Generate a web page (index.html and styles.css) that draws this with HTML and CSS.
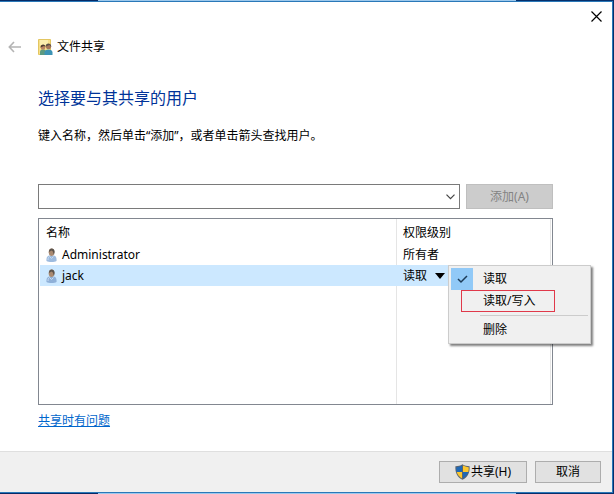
FILE: index.html
```html
<!DOCTYPE html>
<html lang="zh-CN">
<head>
    <meta charset="UTF-8">
    <meta name="viewport" content="width=device-width, initial-scale=1.0">
    <title>文件共享</title>
    <link rel="stylesheet" href="styles.css">
</head>
<body>
    <main class="dialog">
        <!-- Title bar -->
        <div class="title-bar">
            <button type="button" class="close-btn" aria-label="关闭">
                <svg width="11" height="11" viewBox="0 0 11 11"><path d="M.5.5l10 10M10.5.5l-10 10" stroke="#000" stroke-width="1.2"/></svg>
            </button>
        </div>

        <!-- Wizard header -->
        <header class="wizard-header">
            <button type="button" class="back-btn" aria-label="后退" disabled>
                <svg width="13" height="12" viewBox="0 0 13 12" fill="none" stroke="#b4b4b4" stroke-width="1.6"><path d="M6 1L1.3 6 6 11M1.5 6H13"/></svg>
            </button>
            <svg class="folder-icon" width="15" height="17" viewBox="0 0 15 17">
                <path d="M.5.5h12v15H.5z" fill="#f7e08a" stroke="#e3c662"/>
                <path d="M2 1h8v5H2z" fill="#fbeeae"/>
                <path d="M2 16v-3c0-2 1.500-2.500 3-2.500s3 .5 3 2.500v3z" fill="#5c9a80"/>
                <circle cx="5" cy="8.500" r="2.300" fill="#b98563"/>
                <path d="M2.500 8.500C2.300 4.500 7.700 4.500 7.500 8L6 7z" fill="#4c3b31"/>
                <path d="M6.500 16v-2.500c0-2 1.800-3 4-3s4 1 4 3V16z" fill="#3c93b5"/>
                <circle cx="10.500" cy="7.500" r="2.600" fill="#a5765a"/>
                <path d="M7.700 7.500C7.500 3.500 13.500 3.500 13.300 8L11.500 6z" fill="#5b5148"/>
            </svg>
            <span>文件共享</span>
        </header>

        <section class="content">
            <h1>选择要与其共享的用户</h1>
            <p class="hint"><label for="userName">键入名称，然后单击“添加”，或者单击箭头查找用户。</label></p>

            <form class="add-user">
                <div class="combo">
                    <input type="text" id="userName" name="userName" autocomplete="off">
                    <button type="button" class="combo-arrow" aria-label="查找用户">
                        <svg width="9" height="6" viewBox="0 0 9 6" fill="none" stroke="#444" stroke-width="1.2"><path d="M.5.7l4 4 4-4"/></svg>
                    </button>
                </div>
                <button type="submit" class="add-btn" disabled>添加(A)</button>
            </form>

            <!-- User list -->
            <div class="user-list">
                <table>
                    <thead>
                        <tr>
                            <th>名称</th>
                            <th class="level">权限级别</th>
                        </tr>
                    </thead>
                    <tbody>
                        <tr>
                            <td>
                                <div class="user">
                                    <svg width="11" height="14" viewBox="0 0 11 14">
                                        <path d="M.5 13c-.5-4 1.500-5.500 3-5.500h4c2 0 3.500 2 3 5.500-2 1.300-8 1.300-10 0z" fill="#9dbbdf"/>
                                        <path d="M2 12c0-2 .5-3 1.500-3.500l2 2 2-2" fill="none" stroke="#c9dcf1"/>
                                        <ellipse cx="5.500" cy="4.300" rx="2.800" ry="3.800" fill="#aa8a71"/>
                                        <path d="M3 4C2.500-.8 9-.8 8.600 4L8 7C7 5 7.500 3 5.500 2.500z" fill="#5d544d"/>
                                    </svg>
                                    <span>Administrator</span>
                                </div>
                            </td>
                            <td class="level">所有者</td>
                        </tr>
                        <tr class="selected">
                            <td>
                                <div class="user">
                                    <svg width="11" height="14" viewBox="0 0 11 14">
                                        <path d="M.5 13c-.5-4 1.500-5.500 3-5.500h4c2 0 3.500 2 3 5.500-2 1.300-8 1.300-10 0z" fill="#8fb0d8"/>
                                        <path d="M2 12c0-2 .5-3 1.500-3.500l2 2 2-2" fill="none" stroke="#c9dcf1"/>
                                        <ellipse cx="5.500" cy="4.300" rx="2.800" ry="3.800" fill="#aa8a71"/>
                                        <path d="M3 4C2.500-.8 9-.8 8.600 4L8 7C7 5 7.500 3 5.500 2.500z" fill="#5d544d"/>
                                    </svg>
                                    <span>jack</span>
                                </div>
                            </td>
                            <td class="level">
                                <button type="button" class="level-btn" aria-haspopup="menu" aria-expanded="true">
                                    读取
                                    <svg width="10" height="6" viewBox="0 0 10 6"><path d="M0 0h10L5 6z"/></svg>
                                </button>
                                <div class="menu" role="menu">
                                    <button type="button" role="menuitemradio" aria-checked="true">
                                        <span class="check">
                                            <svg width="11" height="9" viewBox="0 0 11 9" fill="none" stroke="#1c3a57" stroke-width="1.500"><path d="M1 4l3 3 6-6"/></svg>
                                        </span>
                                        读取
                                    </button>
                                    <button type="button" role="menuitemradio" aria-checked="false" class="marked">读取/写入</button>
                                    <hr>
                                    <button type="button" role="menuitem">删除</button>
                                </div>
                            </td>
                        </tr>
                    </tbody>
                </table>
            </div>

            <a href="#" class="help-link">共享时有问题</a>
        </section>

        <footer class="actions">
            <button type="button">
                <svg width="15" height="16" viewBox="0 0 15 16">
                    <path d="M7.500.3C9.500 1.700 12 2.200 14.600 2.200c.4 6-1.600 11-7.100 13.500C2 13.200 0 8.200.4 2.200 3 2.200 5.500 1.700 7.500.3z" fill="#5b6570"/>
                    <path d="M7 1.600V8H1.700C1.300 6.500 1.200 4.800 1.300 3.200 3.500 3.100 5.500 2.500 7 1.600z" fill="#1f68b5"/>
                    <path d="M8 1.600V8h5.300c.4-1.500.5-3.200.4-4.800C11.500 3.100 9.500 2.500 8 1.600z" fill="#fbc72e"/>
                    <path d="M7 8v6.400C4.500 13 2.500 11 1.700 8z" fill="#fbc72e"/>
                    <path d="M8 8v6.400c2.500-1.400 4.500-3.400 5.300-6.400z" fill="#1f68b5"/>
                </svg>
                共享(H)
            </button>
            <button type="button" class="cancel-btn">取消</button>
        </footer>
    </main>
</body>
</html>
```

FILE: styles.css
```css
* {
    box-sizing: border-box;
}

/* Desktop behind the dialog */
body {
    margin: 0;
    padding: 1px 1px 1px 0;
    min-height: 100vh;
    display: flex;
    background: linear-gradient(90deg, #052a66 16%, #9cc8ec 16%, #9cc8ec 84%, #052f6b 84%);
    font-family: "Noto Sans", "Noto Sans CJK SC", sans-serif;
    font-size: 12px;
    line-height: 20px;
    color: #000;
}

button, input {
    font: inherit;
    color: inherit;
}

button {
    padding: 0;
    border: none;
    background: none;
}

svg {
    display: block;
    flex: none;
}

.dialog {
    flex: 1;
    display: flex;
    flex-direction: column;
    background: #fff;
    border: 1px solid #2a78b8;
    border-left: none;
}

.title-bar {
    display: flex;
    justify-content: flex-end;
    height: 28px;
}

.close-btn {
    display: flex;
    align-items: center;
    padding: 0 10px;
}

.wizard-header {
    display: flex;
    align-items: center;
    height: 34px;
    padding-left: 8px;
}

.folder-icon {
    margin: 0 4px 0 17px;
}

.content {
    flex: 1;
    display: flex;
    flex-direction: column;
    padding: 22px 59px 20px 38px;
}

h1 {
    margin: 0;
    font-size: 16px;
    line-height: 24px;
    font-weight: normal;
    color: #003399;
}

.hint {
    margin: 16px 0 38px;
}

.add-user {
    display: flex;
    gap: 6px;
    margin-bottom: 9px;
}

.combo {
    flex: 1;
    display: flex;
    height: 25px;
    border: 1px solid #7a7a7a;
}

.combo input {
    flex: 1;
    min-width: 0;
    padding: 0 4px;
    border: none;
    outline: none;
}

.combo-arrow {
    display: flex;
    align-items: center;
    padding: 0 4px;
}

.add-btn {
    width: 87px;
    background: #ccc;
    border: 1px solid #bfbfbf;
    color: #838383;
}

/* The background draws the two column dividers */
.user-list {
    flex: 1;
    padding: 2px 1px;
    border: 1px solid #828790;
    background:
        linear-gradient(#e5e5e5, #e5e5e5) right 155px top / 1px 100% no-repeat,
        linear-gradient(#e5e5e5, #e5e5e5) right 1px top / 1px 100% no-repeat;
}

table {
    width: 100%;
    table-layout: fixed;
    border-collapse: collapse;
}

th, td {
    height: 21px;
    padding: 0 6px;
    font-weight: normal;
    text-align: left;
}

th {
    height: 23px;
}

.level {
    position: relative;
    width: 154px;
}

.selected {
    background: #cce8ff;
}

.user {
    display: flex;
    align-items: center;
    gap: 5px;
}

.level-btn {
    display: flex;
    align-items: center;
    gap: 8px;
}

/* Permission menu */
.menu {
    position: absolute;
    top: 0;
    left: 51px;
    width: 143px;
    padding: 2px;
    background: #f0f0f0;
    border: 1px solid #ccc;
    box-shadow: 2px 2px 2px rgba(0, 0, 0, 0.5);
}

.menu button {
    position: relative;
    display: flex;
    align-items: center;
    width: 100%;
    height: 22px;
    padding-left: 32px;
}

.menu hr {
    margin: 3px 0 3px 29px;
    border: none;
    border-top: 1px solid #ccc;
}

.check {
    position: absolute;
    top: 0;
    left: 0;
    display: flex;
    align-items: center;
    justify-content: center;
    width: 22px;
    height: 22px;
    background: #91c9f7;
}

.marked::before {
    content: "";
    position: absolute;
    top: 0;
    bottom: 0;
    left: 10px;
    width: 92px;
    border: 1px solid #e0394a;
}

.help-link {
    align-self: flex-start;
    margin-top: 6px;
    line-height: 20px;
    color: #0066cc;
}

.actions {
    display: flex;
    justify-content: flex-end;
    gap: 8px;
    padding: 9px 11px;
    background: #f0f0f0;
    border-top: 1px solid #dfdfdf;
}

.actions button {
    display: flex;
    align-items: center;
    justify-content: center;
    gap: 1px;
    width: 88px;
    height: 22px;
    background: #e1e1e1;
    border: 1px solid #adadad;
}

.actions .cancel-btn {
    width: 66px;
}
```
